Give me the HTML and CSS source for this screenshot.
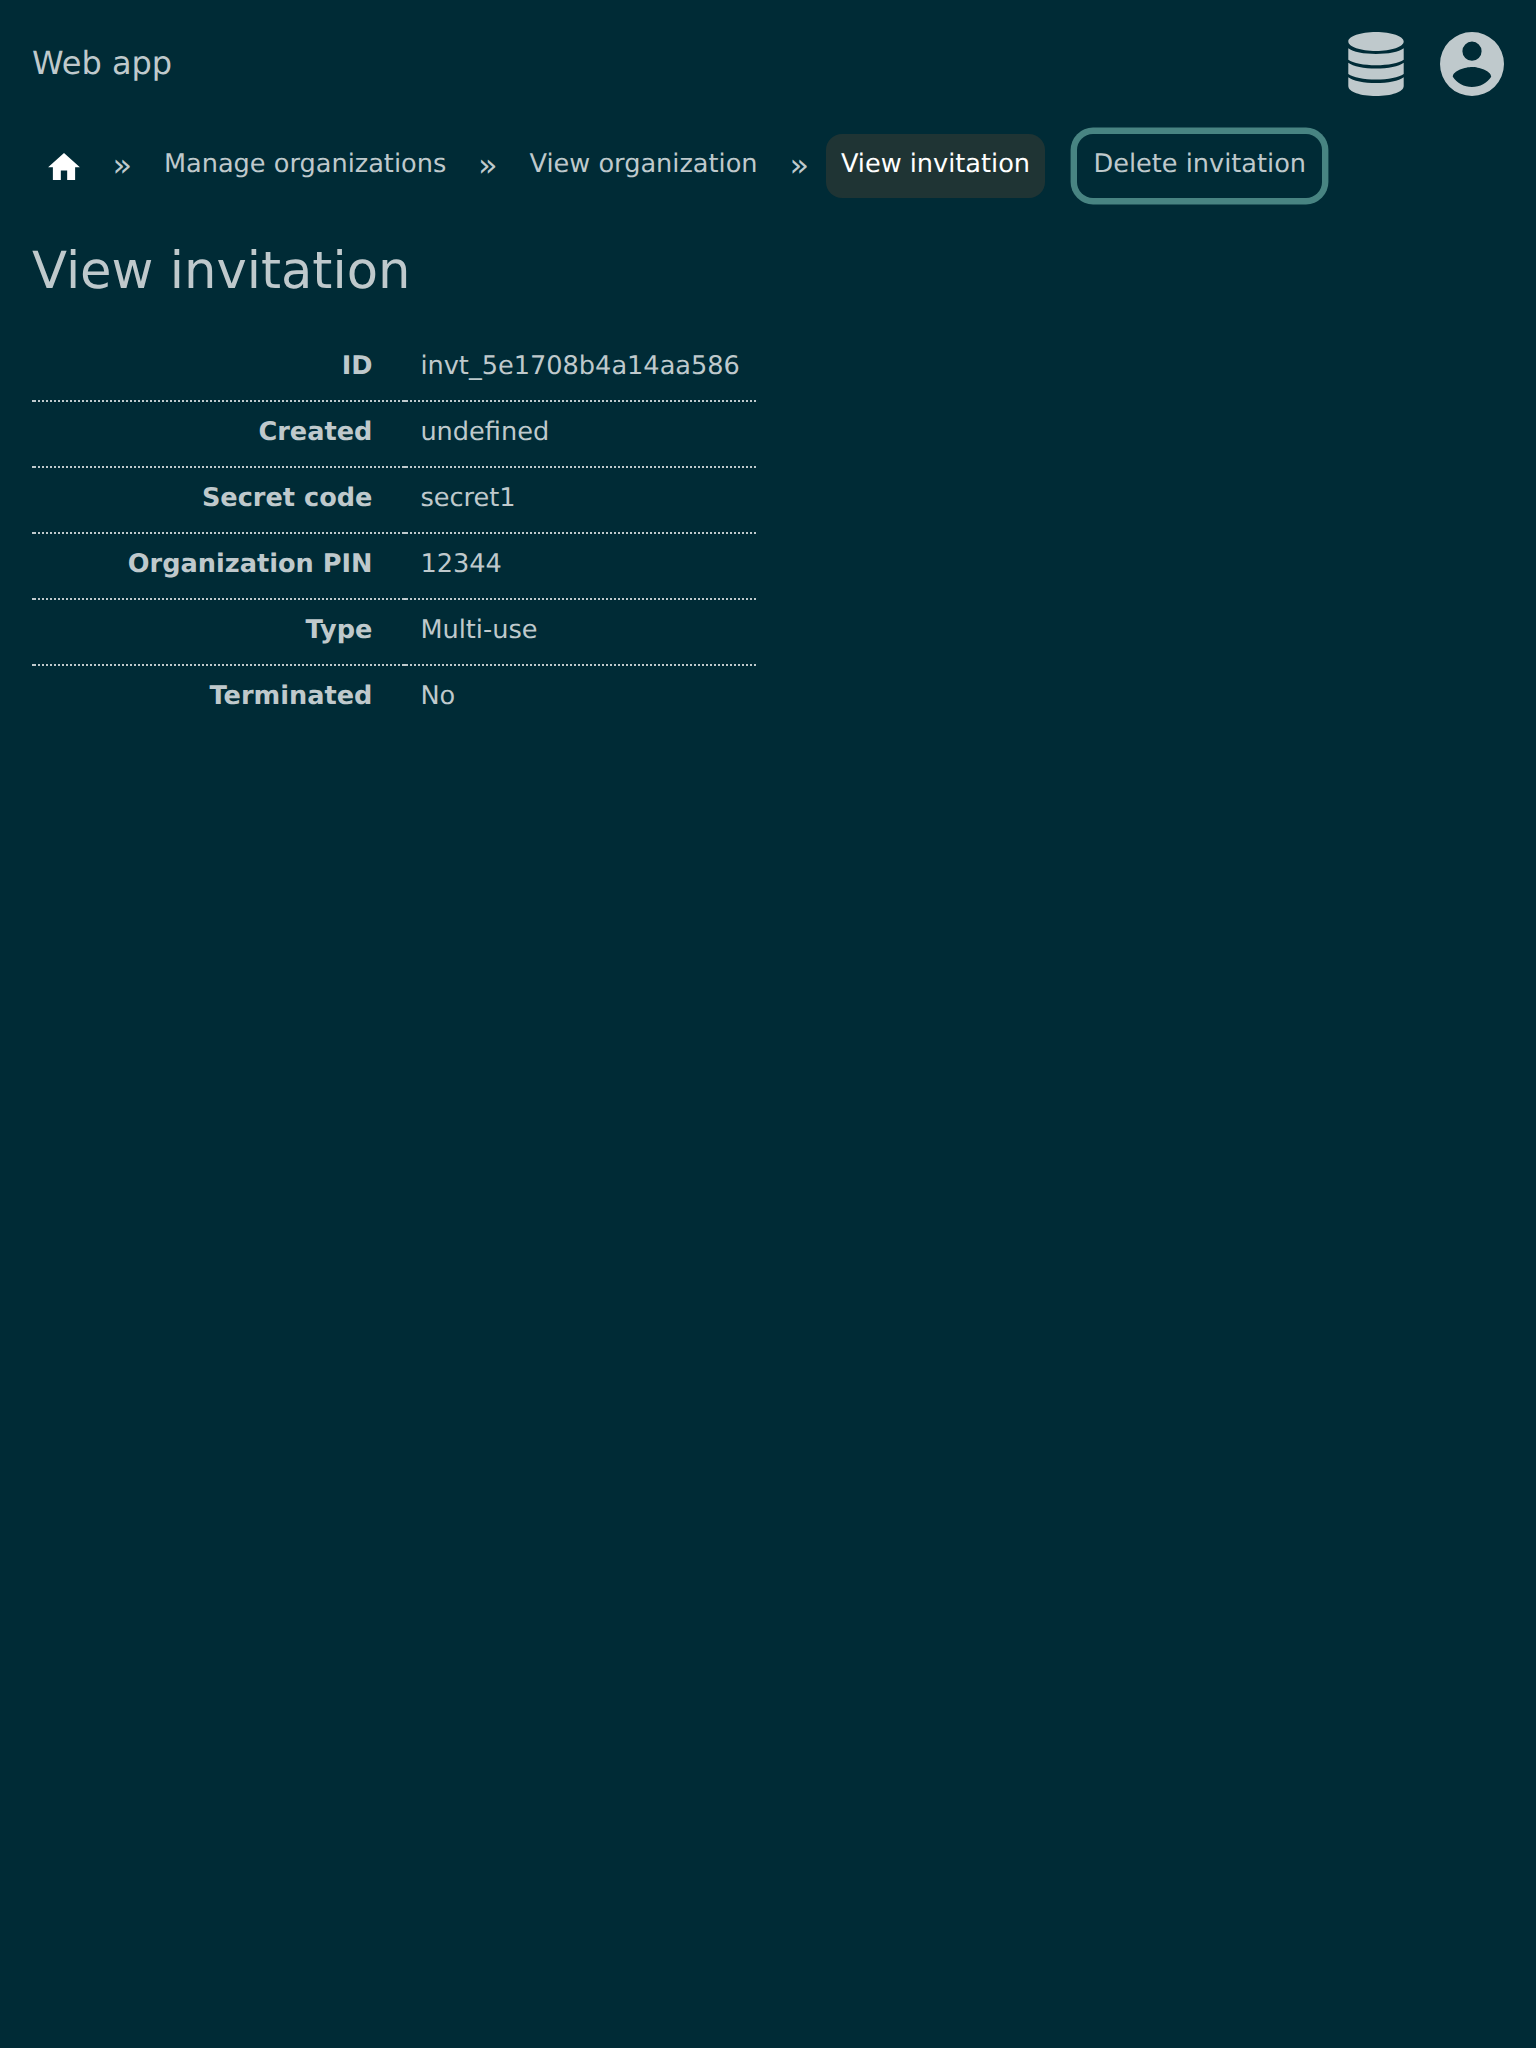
FILE: index.html
```html
<!DOCTYPE html>
<html lang="en">
<head>
<meta charset="utf-8">
<title>View invitation</title>
<link rel="stylesheet" href="styles.css">
</head>
<body>
<header class="header">
  <a class="brand">Web app</a>
  <div class="menus">
    <svg class="icon-db" viewBox="0 0 56 64"><path d="M28 0C43.500 0 55.700 4.300 55.700 9.500C55.700 14.700 43.500 19 28 19C12.500 19 0.300 14.700 0.300 9.500C0.300 4.300 12.500 0 28 0ZM0.300 16.300C5 20 16 22 28 22C40 22 51 20 55.700 16.300V27.700C51 31 40 33.200 28 33.200C16 33.200 5 31 0.300 27.700ZM0.300 30.700C5 34.500 16 36.500 28 36.500C40 36.500 51 34.500 55.700 30.700V42C51 45.500 40 47.600 28 47.600C16 47.600 5 45.500 0.300 42ZM0.300 45.200C5 49 16 51 28 51C40 51 51 49 55.700 45.200V54C55.700 60 43.500 64 28 64C12.500 64 0.300 60 0.300 54Z"/></svg>
    <svg class="icon-user" viewBox="0 0 64 64"><path fill-rule="evenodd" d="M32 0a32 32 0 1 1 0 64a32 32 0 1 1 0-64ZM32 9.600a9.600 9.600 0 1 0 0 19.200a9.600 9.600 0 1 0 0-19.200ZM32 55.040c8 0 15.070-4.100 19.200-10.300c-.1-6.370-12.800-9.860-19.200-9.860c-6.430 0-19.100 3.490-19.200 9.860c4.130 6.200 11.200 10.300 19.200 10.300Z"/></svg>
  </div>
</header>
<nav class="crumbs">
  <a class="crumb home"><svg class="icon-home" viewBox="2 3 20 17"><path d="M10 20v-6h4v6h5v-8h3L12 3 2 12h3v8z"/></svg></a>
  <span class="sep">»</span>
  <a class="crumb">Manage organizations</a>
  <span class="sep">»</span>
  <a class="crumb">View organization</a>
  <span class="sep">»</span>
  <a class="crumb current">View invitation</a>
  <a class="crumb action">Delete invitation</a>
</nav>
<main>
  <h1 class="title">View invitation</h1>
  <table class="details">
    <tr><th>ID</th><td>invt_5e1708b4a14aa586</td></tr>
    <tr><th>Created</th><td>undefined</td></tr>
    <tr><th>Secret code</th><td>secret1</td></tr>
    <tr><th>Organization PIN</th><td>12344</td></tr>
    <tr><th>Type</th><td>Multi-use</td></tr>
    <tr><th>Terminated</th><td>No</td></tr>
  </table>
</main>
</body>
</html>
```

FILE: styles.css
```css
body {
  margin: 0;
  padding: 32px;
  background: #002b36;
  color: #bfc9cc;
  font: 25.6px/32px "DejaVu Sans", sans-serif;
  text-rendering: geometricPrecision;
}
svg { display: block; fill: currentColor; }
.header {
  display: flex;
  justify-content: space-between;
  height: 64px;
}
.brand { font-size: 32px; line-height: 63px; }
.menus { display: flex; gap: 36px; }
.icon-db { width: 56px; height: 64px; }
.icon-user { width: 64px; height: 64px; }
.crumbs {
  display: flex;
  margin-top: 38px;
  height: 64px;
}
.crumb {
  box-sizing: border-box;
  height: 64px;
  padding: 14px 15.36px 0;
  border-radius: 16px;
  white-space: nowrap;
}
.home { padding: 18.500px 16px 0; color: #fff; }
.icon-home { width: 32px; height: 27px; }
.sep { width: 52.600px; padding-top: 15px; font-size: 32px; text-align: center; }
.current { background: #1f3434; color: #fff; }
.action { margin-left: 32px; padding: 14px 16px 0; box-shadow: 0 0 0 6.400px #488482; }
.title {
  margin: 41px 0 0;
  font-size: 51.2px;
  font-weight: 400;
  line-height: 64px;
}
.details {
  margin-top: 33px;
  border-spacing: 0;
}
th, td { box-sizing: border-box; height: 66px; padding: 0 0 6px 16px; line-height: 60px; }
th { width: 372px; padding-right: 31.600px; text-align: right; }
td { width: 352px; min-width: 352px; max-width: 352px; padding-left: 16.400px; white-space: nowrap; }
/* Dotted rule under each row, with a solid cap at the start of each cell */
tr:not(:last-child) th,
tr:not(:last-child) td {
  background:
    linear-gradient(#bfc9cc, #bfc9cc) 0 100% / 4px 2px no-repeat,
    linear-gradient(90deg, transparent 50%, #bfc9cc 50%) 0 100% / 4px 2px repeat-x;
}
```
